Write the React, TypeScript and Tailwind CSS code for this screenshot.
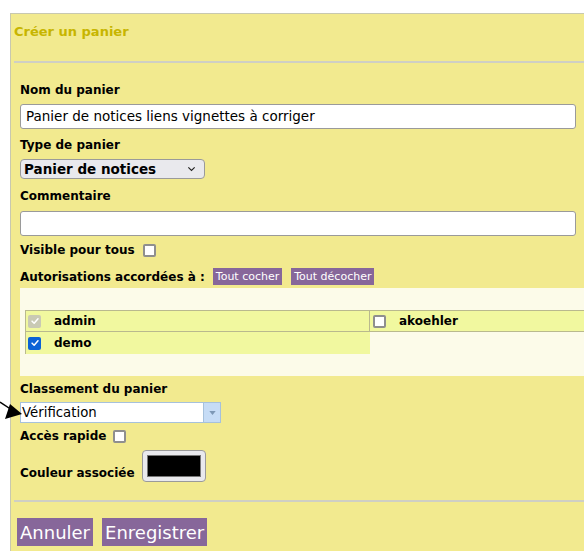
import type { JSX } from "react";

const users = [
  [
    { name: "admin", checked: true, disabled: true },
    { name: "akoehler", checked: false },
  ],
  [{ name: "demo", checked: true }],
];

const Check = ({ checked, disabled }: { checked?: boolean; disabled?: boolean }) => {
  if (checked) {
    return (
      <span
        className={`inline-flex h-[13px] w-[13px] items-center justify-center rounded-[2px] ${
          disabled ? "bg-[#c9c9b4]" : "bg-[#0b62d6]"
        }`}
      >
        <svg viewBox="0 0 12 12" className="h-[10px] w-[10px]">
          <path d="M2.5 6.2 5 8.6 9.6 3.4" fill="none" stroke="white" strokeWidth="1.8" strokeLinecap="round" strokeLinejoin="round" />
        </svg>
      </span>
    );
  }
  return <span className="inline-block h-[13px] w-[13px] rounded-[2px] border-2 border-[#8f8f8f] bg-white" />;
};

const Label = ({ children }: { children: React.ReactNode }) => (
  <div className="text-[12px] font-bold leading-4 text-black">{children}</div>
);

const App = (): JSX.Element => {
  return (
    <div className="relative h-[551px] w-[584px] overflow-hidden bg-white pl-[10px] pt-[13px] font-['DejaVu_Sans',sans-serif]">
      <div className="h-full border-l border-t border-[#c8c8b0] bg-[#f2ea8f]">
        {/* Header */}
        <div className="pl-[3px] pt-[10px] text-[13px] font-bold leading-4 text-[#c7b500]">Créer un panier</div>
        <div className="ml-[3px] mt-[21px] h-[2px] bg-[#cfcfc4]" />

        {/* Form body */}
        <div className="pl-[9px] pt-[19px]">
          <Label>Nom du panier</Label>
          <div className="mt-[6px] mr-[8px] flex h-[25px] items-center rounded-[3px] border border-[#9a9a9a] bg-white px-[5px] text-[13.5px] text-black">
            Panier de notices liens vignettes à corriger
          </div>

          <div className="mt-[8px]">
            <Label>Type de panier</Label>
          </div>
          <div className="mt-[6px] flex h-[20px] w-[185px] items-center justify-between rounded-[4px] border border-[#9a9a9a] bg-[#e9e9ed] pl-[3px] pr-[8px]">
            <span className="text-[13.5px] font-bold text-black">Panier de notices</span>
            <svg viewBox="0 0 10 6" className="h-[6px] w-[9px]">
              <path d="M1.5 1.2 5 4.6 8.5 1.2" fill="none" stroke="#222" strokeWidth="1.3" />
            </svg>
          </div>

          <div className="mt-[9px]">
            <Label>Commentaire</Label>
          </div>
          <div className="mt-[7px] mr-[8px] h-[25px] rounded-[3px] border border-[#9a9a9a] bg-white" />

          <div className="mt-[6px] flex items-center gap-[8px]">
            <Label>Visible pour tous</Label>
            <Check />
          </div>

          <div className="mt-[10px] flex items-center">
            <Label>Autorisations accordées à :</Label>
            <span className="ml-[8px] bg-[#87679a] px-[3px] py-[1px] text-[11px] leading-[15px] text-white">Tout cocher</span>
            <span className="ml-[9px] bg-[#87679a] px-[3px] py-[1px] text-[11px] leading-[15px] text-white">Tout décocher</span>
          </div>
        </div>

        {/* Authorised users */}
        <div className="ml-[9px] mt-[3px] bg-[#fcfbe9] pb-[22px] pl-[5px] pt-[22px]">
          {users.map((row, r) => (
            <div key={r} className="flex">
              {row.map((u, c) => (
                <div
                  key={u.name}
                  className={`flex h-[22px] items-center bg-[#f1f89f] ${c === 0 ? "w-[345px] pl-[2px]" : "flex-1 pl-[3px]"} ${
                    r === 0 ? "border-t border-b border-[#b9b98e]" : ""
                  } ${r === 0 && c === 0 ? "border-r" : ""} ${c === 0 ? "border-l border-[#b9b98e]" : ""}`}
                >
                  <Check checked={u.checked} disabled={u.disabled} />
                  <span className="ml-[13px] text-[12px] font-bold text-black">{u.name}</span>
                </div>
              ))}
            </div>
          ))}
        </div>

        <div className="pl-[9px] pt-[5px]">
          <Label>Classement du panier</Label>
          <div className="mt-[5px] flex h-[21px] w-[201px] border border-[#a6c1dc] bg-white">
            <span className="flex-1 pl-[1px] text-[13.3px] leading-[20px] text-black">Vérification</span>
            <span className="flex w-[17px] items-center justify-center border-l border-[#a6c1dc] bg-[#c6dcf6]">
              <svg viewBox="0 0 8 5" className="h-[4px] w-[7px]">
                <path d="M0 0h8L4 5z" fill="#7d98b6" />
              </svg>
            </span>
          </div>

          <div className="mt-[5px] flex items-center gap-[7px]">
            <Label>Accès rapide</Label>
            <Check />
          </div>

          <div className="mt-[6px] flex items-end gap-[7px]">
            <div className="pb-[1px]">
              <Label>Couleur associée</Label>
            </div>
            <div className="h-[32px] w-[64px] rounded-[4px] border border-[#9a9a9a] bg-[#e9e9ed] p-[4px]">
              <div className="h-full w-full border border-[#777] bg-black" />
            </div>
          </div>
        </div>

        <div className="ml-[3px] mt-[18px] h-[2px] bg-[#cfcfc4]" />

        {/* Actions */}
        <div className="flex gap-[9px] pl-[6px] pt-[16px]">
          <span className="flex h-[28px] items-center bg-[#87679a] px-[3px] text-[18px] text-white">Annuler</span>
          <span className="flex h-[28px] items-center bg-[#87679a] px-[3px] text-[18px] text-white">Enregistrer</span>
        </div>
      </div>

      {/* Pointer arrow next to the classification field */}
      <svg className="absolute left-0 top-[398px] h-[24px] w-[24px]" viewBox="0 0 24 24">
        <path d="M0 4 12 12" stroke="black" strokeWidth="1.5" />
        <path d="M22 16 5 21 10 6z" fill="black" />
      </svg>
    </div>
  );
};

export default App;
